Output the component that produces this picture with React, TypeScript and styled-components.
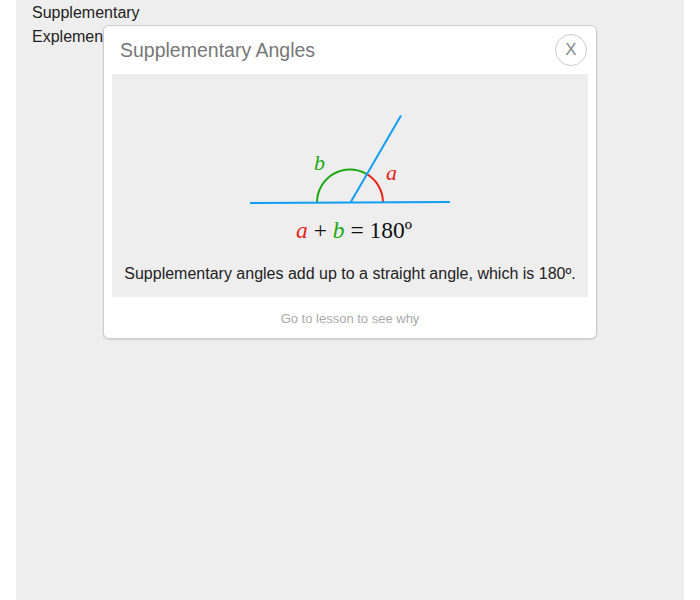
import React from "react";
import styled, { createGlobalStyle } from "styled-components";

const Global = createGlobalStyle`
  html, body { margin: 0; padding: 0; background: #fff; }
  body { font-family: "Liberation Sans", Arial, sans-serif; }
`;

const Column = styled.div`
  position: relative;
  margin: 0 16px;
  min-height: 600px;
  background: #eeeeee;
  padding: 1px 16px 0;
  box-sizing: border-box;
`;

const ListItem = styled.div`
  font-size: 16px;
  line-height: 24px;
  color: #222;
`;

const Popup = styled.div`
  position: absolute;
  left: 87px;
  top: 25px;
  width: 494px;
  box-sizing: border-box;
  background: #fff;
  border: 1px solid #cccccc;
  border-radius: 6px;
  box-shadow: 0 1px 2px rgba(0, 0, 0, 0.12);
  display: flex;
  flex-direction: column;
`;

const Header = styled.div`
  height: 48px;
  display: flex;
  align-items: center;
  justify-content: space-between;
  padding: 0 9px 0 16px;
`;

const Title = styled.div`
  font-size: 19.5px;
  color: #777;
`;

const CloseButton = styled.button`
  width: 32px;
  height: 32px;
  border-radius: 50%;
  border: 1px solid #cccccc;
  background: #fff;
  color: #888;
  font-family: "Liberation Sans", Arial, sans-serif;
  font-size: 17px;
  padding: 0;
  display: flex;
  align-items: center;
  justify-content: center;
`;

const Content = styled.div`
  margin: 0 8px;
  background: #eeeeee;
  padding-bottom: 11px;
  display: flex;
  flex-direction: column;
  align-items: center;
`;

const Diagram = styled.svg`
  display: block;
`;

const Caption = styled.div`
  font-size: 16px;
  line-height: 24px;
  color: #222;
  text-align: center;
`;

const Footer = styled.div`
  height: 41px;
  line-height: 43px;
  text-align: center;
  font-size: 13px;
  color: #aaa;
`;

const BLUE = "#0f9ef2";
const GREEN = "#1caa12";
const RED = "#e8251a";

function AngleDiagram() {
  const cx = 350;
  const cy = 202.5;
  const r = 33;
  const rad = (deg: number) => (deg * Math.PI) / 180;
  const px = (deg: number) => cx + r * Math.cos(rad(deg));
  const py = (deg: number) => cy - r * Math.sin(rad(deg));
  return (
    <Diagram width={476} height={188} viewBox="112 74 476 188">
      <path
        d={`M ${px(60)} ${py(60)} A ${r} ${r} 0 0 1 ${px(0)} ${py(0)}`}
        fill="none"
        stroke={RED}
        strokeWidth={2}
      />
      <path
        d={`M ${px(180)} ${py(180)} A ${r} ${r} 0 0 1 ${px(60)} ${py(60)}`}
        fill="none"
        stroke={GREEN}
        strokeWidth={2}
      />
      <line x1={250} y1={203} x2={450} y2={202} stroke={BLUE} strokeWidth={2} />
      <line x1={350.5} y1={202.5} x2={401} y2={115.5} stroke={BLUE} strokeWidth={2} />
      <text x={314} y={170} fill={GREEN} fontFamily="'Liberation Serif', serif" fontStyle="italic" fontSize={22}>b</text>
      <text x={386} y={180} fill={RED} fontFamily="'Liberation Serif', serif" fontStyle="italic" fontSize={22}>a</text>
      <text x={296} y={238} fontFamily="'Liberation Serif', serif" fontSize={23.5} fill="#111">
        <tspan fill={RED} fontStyle="italic">a</tspan>
        <tspan> + </tspan>
        <tspan fill={GREEN} fontStyle="italic">b</tspan>
        <tspan> = 180º</tspan>
      </text>
    </Diagram>
  );
}

export default function App() {
  return (
    <>
      <Global />
      <Column>
        <ListItem>Supplementary</ListItem>
        <ListItem>Explementary</ListItem>
        <Popup>
          <Header>
            <Title>Supplementary Angles</Title>
            <CloseButton>X</CloseButton>
          </Header>
          <Content>
            <AngleDiagram />
            <Caption>Supplementary angles add up to a straight angle, which is 180º.</Caption>
          </Content>
          <Footer>Go to lesson to see why</Footer>
        </Popup>
      </Column>
    </>
  );
}
